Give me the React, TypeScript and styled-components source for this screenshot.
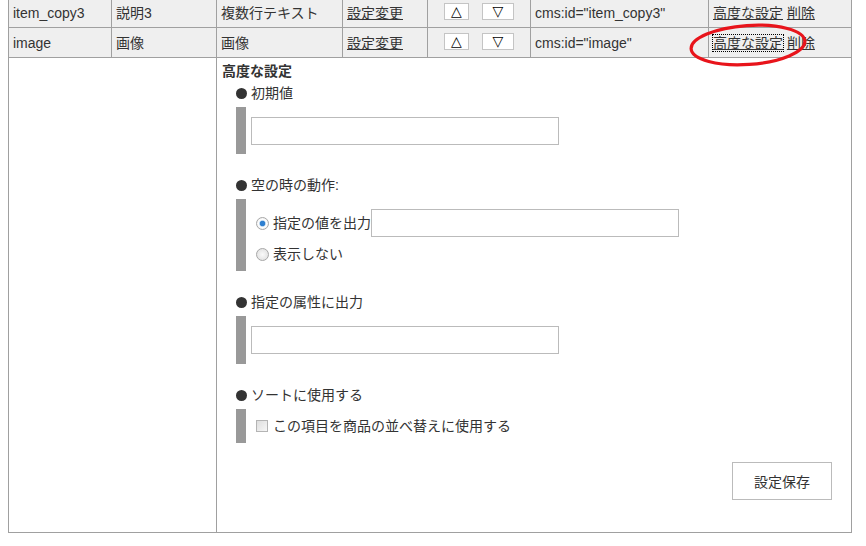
import React from "react";
import styled, { createGlobalStyle } from "styled-components";

const GlobalStyle = createGlobalStyle`
  html, body {
    margin: 0;
    padding: 0;
    background: #fff;
  }
  body {
    font-family: "Liberation Sans", "Noto Sans CJK JP", sans-serif;
    font-size: 14px;
    color: #333;
  }
`;

const Page = styled.div`
  position: relative;
  padding: 0 8px;
  overflow: hidden;
  height: 546px;
`;

const Table = styled.table`
  width: 844px;
  margin-top: -3px;
  border-collapse: collapse;
  table-layout: fixed;
`;

const Row = styled.tr`
  background: #efefef;
`;

const Cell = styled.td`
  height: 30px;
  box-sizing: border-box;
  padding: 0 4px;
  border: 1px solid #a0a0a0;
  vertical-align: middle;
  white-space: nowrap;
  line-height: 20px;
`;

const Link = styled.a<{ $focused?: boolean }>`
  color: #333;
  text-decoration: underline;
  cursor: pointer;
  ${({ $focused }) => $focused && `outline: 1px dotted #000; outline-offset: 0px;`}
`;

const Arrows = styled.div`
  display: flex;
  justify-content: center;
  gap: 13px;
  margin-top: -3px;
`;

const ArrowButton = styled.button<{ $w: number }>`
  width: ${({ $w }) => $w}px;
  height: 17px;
  padding: 0;
  border: 1px solid #c4c4c4;
  background: #fff;
  font-family: "DejaVu Sans", sans-serif;
  font-size: 14px;
  line-height: 14px;
  color: #000;
`;

const DetailRow = styled.tr`
  background: #fff;
`;

const DetailCell = styled.td`
  border: 1px solid #a0a0a0;
  vertical-align: top;
  padding: 3px 0 32px 5px;
`;

const Heading = styled.div`
  font-weight: bold;
  line-height: 20px;
  margin-bottom: 2px;
`;

const Section = styled.div`
  margin-left: 14px;
  & + & {
    margin-top: 21px;
  }
`;

const SectionTitle = styled.div`
  display: flex;
  align-items: center;
  line-height: 20px;
  margin-bottom: 4px;
  &::before {
    content: "";
    width: 11px;
    height: 11px;
    margin-right: 4px;
    border-radius: 50%;
    background: #333;
  }
`;

const Block = styled.div<{ $pad: string }>`
  border-left: 10px solid #999;
  padding: ${({ $pad }) => $pad};
  padding-left: 5px;
`;

const TextInput = styled.input`
  display: block;
  width: 308px;
  height: 28px;
  box-sizing: border-box;
  border: 1px solid #bbb;
  margin: 0;
  padding: 2px 4px;
  font: inherit;
`;

const OptionRow = styled.label<{ $gap?: number }>`
  display: flex;
  align-items: center;
  margin-left: 5px;
  margin-top: ${({ $gap }) => $gap ?? 0}px;
  min-height: 20px;
  line-height: 20px;
`;

const Radio = styled.span<{ $on?: boolean }>`
  width: 11px;
  height: 11px;
  margin-right: 4px;
  border-radius: 50%;
  border: 1px solid #a8a8a8;
  background: ${({ $on }) =>
    $on
      ? "radial-gradient(circle, #2e7fd0 0 2.5px, #bcd6ee 3px, #fff 3.8px, #e4e4e4 100%)"
      : "radial-gradient(circle, #fafafa 0, #dcdcdc 100%)"};
  flex: none;
`;

const Check = styled.span`
  width: 10px;
  height: 10px;
  margin-right: 5px;
  border: 1px solid #b4b4b4;
  background: linear-gradient(135deg, #dedede, #f6f6f6);
  flex: none;
`;

const SaveBar = styled.div`
  display: flex;
  justify-content: flex-end;
  padding-right: 19px;
  margin-top: 19px;
`;

const SaveButton = styled.button`
  width: 100px;
  height: 38px;
  border: 1px solid #bbb;
  background: #fff;
  font-family: "Liberation Sans", "Noto Sans CJK JP", sans-serif;
  font-size: 14px;
  color: #333;
`;

const Marker = styled.svg`
  position: absolute;
  left: 685px;
  top: 21px;
  pointer-events: none;
`;

const rows = [
  { id: "item_copy3", name: "説明3", type: "複数行テキスト" },
  { id: "image", name: "画像", type: "画像" },
];

export default function App() {
  return (
    <>
      <GlobalStyle />
      <Page>
        <Table>
          <colgroup>
            <col style={{ width: 103 }} />
            <col style={{ width: 105 }} />
            <col style={{ width: 126 }} />
            <col style={{ width: 85 }} />
            <col style={{ width: 103 }} />
            <col style={{ width: 178 }} />
            <col style={{ width: 143 }} />
          </colgroup>
          <tbody>
            {rows.map((r, i) => (
              <Row key={r.id}>
                <Cell>{r.id}</Cell>
                <Cell>{r.name}</Cell>
                <Cell>{r.type}</Cell>
                <Cell>
                  <Link>設定変更</Link>
                </Cell>
                <Cell>
                  <Arrows>
                    <ArrowButton $w={25}>△</ArrowButton>
                    <ArrowButton $w={32}>▽</ArrowButton>
                  </Arrows>
                </Cell>
                <Cell>cms:id="{r.id}"</Cell>
                <Cell>
                  <Link $focused={i === 1}>高度な設定</Link> <Link>削除</Link>
                </Cell>
              </Row>
            ))}
            <DetailRow>
              <DetailCell colSpan={2} />
              <DetailCell colSpan={5}>
                <Heading>高度な設定</Heading>
                <Section>
                  <SectionTitle>初期値</SectionTitle>
                  <Block $pad="10px 0 9px">
                    <TextInput />
                  </Block>
                </Section>
                <Section>
                  <SectionTitle>空の時の動作:</SectionTitle>
                  <Block $pad="10px 0 7px">
                    <OptionRow>
                      <Radio $on />
                      指定の値を出力
                      <TextInput />
                    </OptionRow>
                    <OptionRow $gap={7}>
                      <Radio />
                      表示しない
                    </OptionRow>
                  </Block>
                </Section>
                <Section>
                  <SectionTitle>指定の属性に出力</SectionTitle>
                  <Block $pad="10px 0 10px">
                    <TextInput />
                  </Block>
                </Section>
                <Section>
                  <SectionTitle>ソートに使用する</SectionTitle>
                  <Block $pad="7px 0 7px">
                    <OptionRow>
                      <Check />
                      この項目を商品の並べ替えに使用する
                    </OptionRow>
                  </Block>
                </Section>
                <SaveBar>
                  <SaveButton>設定保存</SaveButton>
                </SaveBar>
              </DetailCell>
            </DetailRow>
          </tbody>
        </Table>
        <Marker width="130" height="52" viewBox="0 0 130 52">
          <ellipse
            cx="63"
            cy="24"
            rx="57"
            ry="19.5"
            fill="none"
            stroke="#e8141b"
            strokeWidth="3.2"
            transform="rotate(-4 63 24)"
          />
        </Marker>
      </Page>
    </>
  );
}
